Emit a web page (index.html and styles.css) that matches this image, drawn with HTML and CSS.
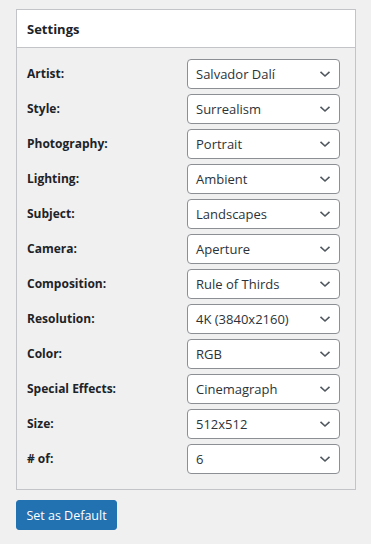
FILE: index.html
```html
<!DOCTYPE html>
<html>
<head>
<meta charset="utf-8">
<link rel="stylesheet" href="styles.css">
</head>
<body>
<div class="page">
  <div class="panel">
    <div class="panel-head">Settings</div>
    <div class="panel-body">
      <div class="row"><label class="lbl">Artist:</label><div class="sel">Salvador Dalí<svg class="chev" viewBox="0 0 12 8"><path d="M1.5 1.8 6 6 10.5 1.8"/></svg></div></div>
      <div class="row"><label class="lbl">Style:</label><div class="sel">Surrealism<svg class="chev" viewBox="0 0 12 8"><path d="M1.5 1.8 6 6 10.5 1.8"/></svg></div></div>
      <div class="row"><label class="lbl">Photography:</label><div class="sel">Portrait<svg class="chev" viewBox="0 0 12 8"><path d="M1.5 1.8 6 6 10.5 1.8"/></svg></div></div>
      <div class="row"><label class="lbl">Lighting:</label><div class="sel">Ambient<svg class="chev" viewBox="0 0 12 8"><path d="M1.5 1.8 6 6 10.5 1.8"/></svg></div></div>
      <div class="row"><label class="lbl">Subject:</label><div class="sel">Landscapes<svg class="chev" viewBox="0 0 12 8"><path d="M1.5 1.8 6 6 10.5 1.8"/></svg></div></div>
      <div class="row"><label class="lbl">Camera:</label><div class="sel">Aperture<svg class="chev" viewBox="0 0 12 8"><path d="M1.5 1.8 6 6 10.5 1.8"/></svg></div></div>
      <div class="row"><label class="lbl">Composition:</label><div class="sel">Rule of Thirds<svg class="chev" viewBox="0 0 12 8"><path d="M1.5 1.8 6 6 10.5 1.8"/></svg></div></div>
      <div class="row"><label class="lbl">Resolution:</label><div class="sel">4K (3840x2160)<svg class="chev" viewBox="0 0 12 8"><path d="M1.5 1.8 6 6 10.5 1.8"/></svg></div></div>
      <div class="row"><label class="lbl">Color:</label><div class="sel">RGB<svg class="chev" viewBox="0 0 12 8"><path d="M1.5 1.8 6 6 10.5 1.8"/></svg></div></div>
      <div class="row"><label class="lbl">Special Effects:</label><div class="sel">Cinemagraph<svg class="chev" viewBox="0 0 12 8"><path d="M1.5 1.8 6 6 10.5 1.8"/></svg></div></div>
      <div class="row"><label class="lbl">Size:</label><div class="sel">512x512<svg class="chev" viewBox="0 0 12 8"><path d="M1.5 1.8 6 6 10.5 1.8"/></svg></div></div>
      <div class="row"><label class="lbl"># of:</label><div class="sel">6<svg class="chev" viewBox="0 0 12 8"><path d="M1.5 1.8 6 6 10.5 1.8"/></svg></div></div>
    </div>
  </div>
  <button class="btn">Set as Default</button>
</div>
</body>
</html>
```
FILE: styles.css
```css
html, body {
  margin: 0;
  padding: 0;
  background: #f0f0f1;
}
body {
  font-family: "Open Sans", "Noto Sans", sans-serif;
  color: #3c434a;
}
.page {
  padding: 9px 16px 0 16px;
  width: 340px;
}
.panel {
  border: 1px solid #c3c4c7;
  background: #f0f0f1;
}
.panel-head {
  background: #fff;
  height: 38px;
  box-sizing: border-box;
  border-bottom: 1px solid #c3c4c7;
  padding: 0 10px;
  display: flex;
  align-items: center;
  font-weight: 700;
  font-size: 13px;
  color: #1d2327;
}
.panel-body {
  padding: 11px 15px 15px 10px;
  display: flex;
  flex-direction: column;
  gap: 5px;
}
.row {
  display: flex;
  align-items: center;
  justify-content: space-between;
  height: 30px;
}
.lbl {
  font-weight: 700;
  font-size: 12px;
  color: #1d2327;
  margin-top: -2px;
}
.sel {
  width: 153px;
  height: 30px;
  box-sizing: border-box;
  border: 1px solid #8c8f94;
  border-radius: 4px;
  background: #fff;
  padding: 0 0 0 8px;
  display: flex;
  align-items: center;
  justify-content: space-between;
  font-size: 13px;
  color: #2c3338;
}
.chev {
  width: 12px;
  height: 8px;
  margin-right: 8px;
  fill: none;
  stroke: #50575e;
  stroke-width: 1.6;
}
.btn {
  margin-top: 10px;
  width: 101px;
  height: 30px;
  border: 1px solid #2271b1;
  background: #2271b1;
  color: #fff;
  border-radius: 3px;
  font-family: "Open Sans", "Noto Sans", sans-serif;
  font-size: 12.5px;
  padding: 0;
}
```
